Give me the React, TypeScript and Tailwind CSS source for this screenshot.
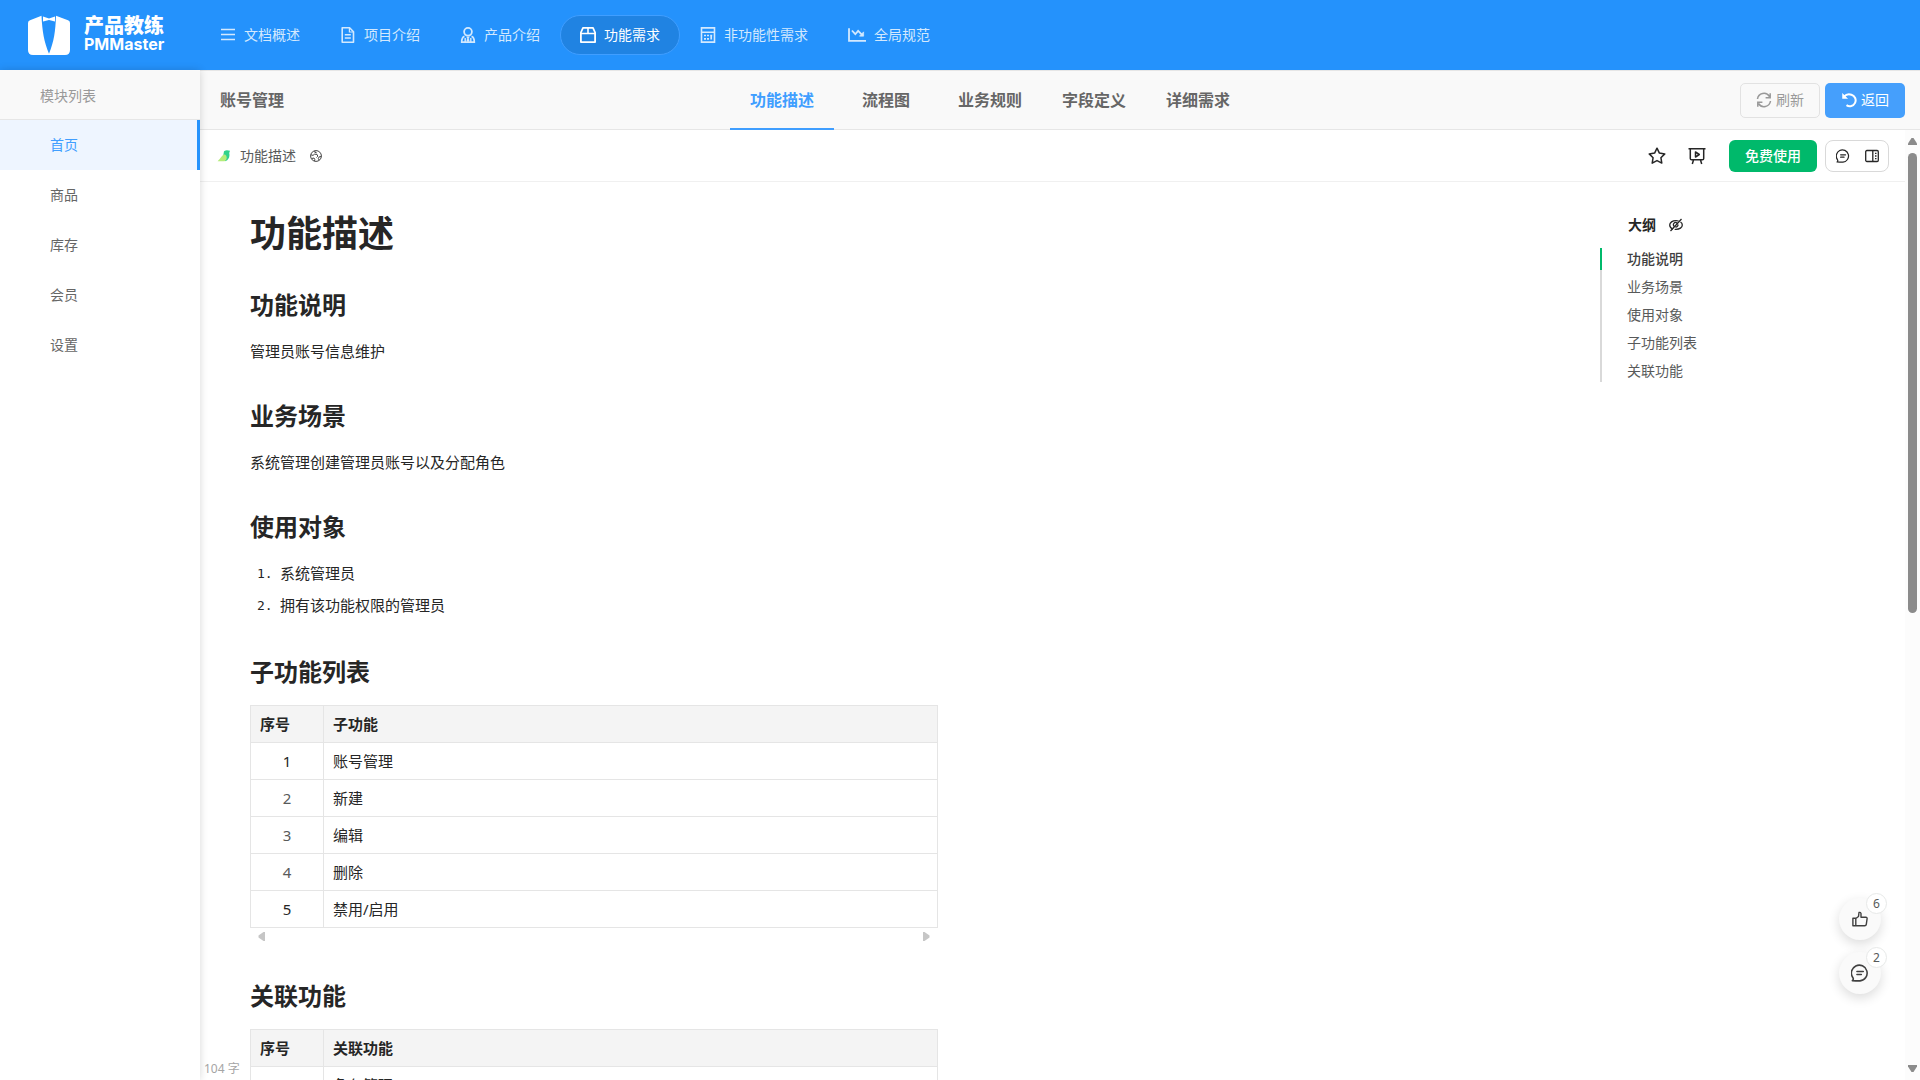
import type { ReactNode } from 'react';

type IconProps = { children: ReactNode; size?: string; viewBox?: string; stroke?: string };

function Icon({ children, size = 'size-4', viewBox = '0 0 16 16', stroke = '1.6' }: IconProps) {
  return (
    <svg className={size + ' shrink-0'} viewBox={viewBox} fill="none" stroke="currentColor" strokeWidth={stroke} aria-hidden="true">
      {children}
    </svg>
  );
}

const navItems = [
  { label: '文档概述', icon: <path d="M1 2.5h14M1 7.5h14M1 12.5h14" /> },
  {
    label: '项目介绍',
    icon: (
      <>
        <path d="M2.2 .8h7.4l3.9 3.9v10.5H2.2z" strokeLinejoin="round" />
        <path d="M9.400 1v4h4" strokeWidth="1.2" />
        <path d="M4.800 7.800h6M4.800 11h6" />
      </>
    ),
  },
  {
    label: '产品介绍',
    icon: (
      <>
        <circle cx="8" cy="4.800" r="3.900" strokeWidth="1.800" />
        <path d="M4.500 9.400C2.600 10 1.700 11.300 1.700 15.100h12.600c0-3.800-.9-5.100-2.800-5.700" strokeWidth="1.700" />
        <path d="M5.200 11v4M10.800 11v4" strokeWidth="1.400" />
        <path d="M6.600 9.800h2.800L8.700 11.500l.6 2.500L8 15l-1.300-1 .6-2.500z" fill="currentColor" strokeWidth="0.300" />
      </>
    ),
  },
  {
    label: '功能需求',
    icon: (
      <>
        <path d="M3 .9h10l2.1 4.6v9.6H.9V5.5z" strokeWidth="1.800" strokeLinejoin="round" />
        <path d="M1 6.5h14M8 1v5.5" />
      </>
    ),
  },
  {
    label: '非功能性需求',
    icon: (
      <>
        <path d="M1.500 .9h13v14.200h-13zM1.500 5.200h13" />
        <path d="M4 8.500h2M7 8.500h2M10.200 8.500h2M4 11.800h2M7 11.800h2M11.200 8v4.600" strokeWidth="1.700" />
      </>
    ),
  },
  {
    label: '全局规范',
    size: 'size-[18px]',
    icon: (
      <>
        <path d="M.9 2v11.300H16" />
        <path d="M3.500 4l3 3.300 2.500-3 4 4" />
        <path d="M10.200 9h3.700V5.200z" fill="currentColor" strokeWidth="0.6" />
      </>
    ),
  },
];

const modules = ['首页', '商品', '库存', '会员', '设置'];
const tabs = ['功能描述', '流程图', '业务规则', '字段定义', '详细需求'];
const outline = ['功能说明', '业务场景', '使用对象', '子功能列表', '关联功能'];
const subFeatures = ['账号管理', '新建', '编辑', '删除', '禁用/启用'];
const relatedFeatures = ['角色管理'];

function Logo() {
  return (
    <a href="#" className="flex w-[200px] shrink-0 items-center pl-7 text-white">
      <svg className="h-10 w-[42px]" viewBox="0 0 42 40" fill="currentColor" aria-hidden="true">
        <path d="M13.5.8 2 5.2Q0 6 0 8v27q0 5 5 5h32q5 0 5-5V8q0-2-2-2.8L28 .8c-.5 15-2 26-7 38-5-12-6.8-23-7.500-38z" />
        <path d="M15 1.500l6 2 6-2v5l-6-1.500-6 1.500z" />
      </svg>
      <span className="flex flex-col pb-0.5 pl-3.5">
        <span className="text-xl leading-[20px] font-black">产品教练</span>
        <span className="font-['Inter','Noto_Sans_CJK_SC',sans-serif] text-base leading-[16px] font-bold">PMMaster</span>
      </span>
    </a>
  );
}

function CommentIcon({ size }: { size: string }) {
  return (
    <Icon size={size} stroke="1.4">
      <path d="M1.200 14.800c.9-.6 1.100-1.500.5-2.600A7 7 0 1 1 8 15c-2.700 0-4.300 0-6.800-.2z" strokeLinejoin="round" />
      <path d="M5.300 6.600h5.600M5.300 9.400h3.900" strokeLinecap="round" />
    </Icon>
  );
}

function FeatureTable({ title, rows }: { title: string; rows: string[] }) {
  return (
    <table className="mt-[15px] w-full max-w-[688px] table-fixed border-collapse text-[15px] leading-6 text-[#262626]">
      <thead>
        <tr className="h-[37px] bg-[#f4f4f4] text-left">
          <th scope="col" className="w-[73px] border border-[#e5e5e5] px-[9px] py-0 font-bold">序号</th>
          <th scope="col" className="border border-[#e5e5e5] px-[9px] py-0 font-bold">{title}</th>
        </tr>
      </thead>
      <tbody>
        {rows.map((row, i) => (
          <tr key={row} className="h-[37px]">
            <td className={'border border-[#e5e5e5] py-0 text-center ' + (i > 0 && i < 4 ? 'text-[#585a5a]' : '')}>{i + 1}</td>
            <td className="border border-[#e5e5e5] px-[9px] py-0">{row}</td>
          </tr>
        ))}
      </tbody>
    </table>
  );
}

function Heading({ children }: { children: ReactNode }) {
  return <h2 className="mt-8 text-2xl leading-9 font-bold">{children}</h2>;
}

export default function App() {
  return (
    <div className="flex h-screen flex-col overflow-hidden bg-white font-['Noto_Sans','Noto_Sans_CJK_SC',sans-serif] text-sm text-[#262626]">
      <header className="flex h-[70px] shrink-0 items-center bg-[#2492fc]">
        <Logo />
        <nav className="flex items-center">
          {navItems.map((item) => (
            <a
              key={item.label}
              href="#"
              className={
                'flex h-10 items-center gap-2 rounded-full border px-[19px] leading-5 whitespace-nowrap ' +
                (item.label === '功能需求' ? 'border-[#409eff] bg-[#2083e2] text-white' : 'border-transparent text-[#d3e9fe]')
              }
            >
              <Icon size={item.size}>{item.icon}</Icon>
              {item.label}
            </a>
          ))}
        </nav>
      </header>

      <div className="flex min-h-0 flex-1">
        <aside className="z-10 w-[200px] shrink-0 bg-white shadow-[0_0_8px_rgba(0,0,0,0.16)]">
          <h2 className="h-[50px] border-b border-[#e6e6e6] bg-[#f9f9f9] pl-10 leading-[52px] text-[#999]">模块列表</h2>
          <nav>
            {modules.map((m, i) => (
              <a
                key={m}
                href="#"
                className={
                  'block h-[50px] border-r-[3px] pl-[50px] leading-[50px] ' +
                  (i === 0 ? 'border-[#2492fc] bg-[#eef5ff] text-[#409eff]' : 'border-transparent text-[#666]')
                }
              >
                {m}
              </a>
            ))}
          </nav>
        </aside>

        <main className="flex min-w-0 flex-1 flex-col">
          <div className="flex h-[60px] shrink-0 items-center border-y border-[#e6e6e6] bg-[#f9f9f9] pr-[15px] pl-5">
            <h1 className="w-[510px] text-base font-bold text-[#666]">账号管理</h1>
            <div role="tablist" className="-mb-px flex self-stretch">
              {tabs.map((t, i) => (
                <button
                  key={t}
                  role="tab"
                  aria-selected={i === 0}
                  className={
                    'w-[104px] border-b-2 text-base font-bold ' +
                    (i === 0 ? 'border-[#409eff] text-[#409eff]' : 'border-transparent text-[#666]')
                  }
                >
                  {t}
                </button>
              ))}
            </div>
            <div className="ml-auto flex gap-[5px]">
              <button className="flex h-[35px] w-20 items-center justify-center gap-1 rounded-[5px] border border-[#e2e2e2] text-[#999]">
                <Icon stroke="1.500">
                  <path d="M1.500 7A6.500 6.500 0 0 1 13.500 4.500M14.500 9a6.500 6.500 0 0 1-12 2.500M14.200 1.200v4.600H9.600M1.800 14.800v-4.600h4.600" />
                </Icon>
                刷新
              </button>
              <button className="flex h-[35px] w-20 items-center justify-center gap-1 rounded-[5px] bg-[#459ffc] text-white">
                <Icon stroke="2">
                  <path d="M3 4.500C5 2.500 8 1.800 10.500 2.800a5.800 5.800 0 1 1-5 10.300" />
                  <path d="M1.500 1.500v5h5z" fill="currentColor" strokeWidth="0.5" />
                </Icon>
                返回
              </button>
            </div>
          </div>

          <div className="flex min-h-0 flex-1">
            <section className="relative flex min-w-0 flex-1 flex-col overflow-hidden">
              <div className="flex h-[52px] shrink-0 items-center border-b border-[#f0f0f0] pr-4 pl-[17px]">
                <svg className="size-3.5" viewBox="0 0 14 14" aria-hidden="true">
                  <path d="M7 2.200C9.500.8 11 1.500 13 1.800L12.200 4c1 4-1 7.500-4 8.200L6 8z" fill="#30d28c" />
                  <path d="M.6 12.200C4 9 5.500 5 8 5.500c2.500 1.500 2.200 5.500-.5 6.700z" fill="#b5ec7a" />
                </svg>
                <span className="ml-[9px] text-[#585a5a]">功能描述</span>
                <span className="ml-3.5 text-[#444]">
                  <Icon size="size-3" viewBox="0 0 12 12" stroke="1">
                    <circle cx="6" cy="6" r="5.400" />
                    <path d="M1 4.800l2 .6 1.500-1.200 2.500.2.800 1.800-1.300 1.300M5 .9l-.3 1.300 2 .6M11.200 6.500l-2 .3-.9 1.800.9 1.600M1.800 8.500l2.200-.5.8 1.500-.3 1.500" />
                  </Icon>
                </span>
                <div className="ml-auto flex items-center text-[#262626]">
                  <button aria-label="收藏" className="p-[11px]">
                    <Icon size="size-[18px]" viewBox="0 0 18 18" stroke="1.500">
                      <path d="M9 1.200l2.400 4.900 5.400.8-3.900 3.800.9 5.400L9 13.600l-4.800 2.500.9-5.400L1.200 6.900l5.400-.8z" strokeLinejoin="round" />
                    </Icon>
                  </button>
                  <button aria-label="演示" className="p-[11px]">
                    <Icon size="size-[18px]" viewBox="0 0 18 18" stroke="1.500">
                      <path d="M.5 1.800h17M2.300 2v9.500q0 1.300 1.300 1.300h10.800q1.300 0 1.300-1.300V2M5.500 13l-1.200 4M12.500 13l1.200 4" />
                      <path d="M7.500 5v5l3.800-2.500z" strokeLinejoin="round" />
                    </Icon>
                  </button>
                  <button className="ml-3 h-8 w-[88px] rounded-md bg-[#00b96b] font-medium text-white">免费使用</button>
                  <div className="ml-2 flex h-8 w-16 items-center justify-around rounded-lg border border-[#d9d9d9] px-0.5">
                    <button aria-label="评论"><CommentIcon size="size-3.5" /></button>
                    <button aria-label="侧栏">
                      <Icon size="size-3.5" viewBox="0 0 14 14" stroke="1.300">
                        <rect x=".7" y="1.500" width="12.600" height="11" rx="1.200" />
                        <path d="M7.800 1.500v11M10 4.300h1.500M10 7h1.500M10 9.700h1.500" />
                      </Icon>
                    </button>
                  </div>
                </div>
              </div>

              <div className="flex min-h-0 flex-1">
                <article className="min-w-0 flex-1 pt-7 pl-[50px] text-[15px]">
                  <h1 className="-mb-[3px] text-4xl leading-[48px] font-bold">功能描述</h1>
                  <Heading>功能说明</Heading>
                  <p className="mt-[13px] leading-[30px]">管理员账号信息维护</p>
                  <Heading>业务场景</Heading>
                  <p className="mt-[13px] leading-[30px]">系统管理创建管理员账号以及分配角色</p>
                  <Heading>使用对象</Heading>
                  <ol className="mt-[13px] leading-[31px]">
                    {['系统管理员', '拥有该功能权限的管理员'].map((t, i) => (
                      <li key={t} className="flex">
                        <span className="w-[30px] pl-[7px] font-['DejaVu_Sans_Mono',monospace] text-[13px] leading-[32px]">{i + 1}.</span>
                        {t}
                      </li>
                    ))}
                  </ol>
                  <Heading>子功能列表</Heading>
                  <FeatureTable title="子功能" rows={subFeatures} />
                  <div className="flex h-[18px] max-w-[688px] items-start justify-between px-2 pt-1 text-[#c6c6c6]">
                    <svg className="h-[9px] w-[7px]" viewBox="0 0 7 9" fill="currentColor" aria-hidden="true"><path d="M7 0v9H5.500L.5 5.500v-2L5.500 0z" /></svg>
                    <svg className="h-[9px] w-[7px]" viewBox="0 0 7 9" fill="currentColor" aria-hidden="true"><path d="M0 0v9h1.500l5-3.500v-2L1.500 0z" /></svg>
                  </div>
                  <Heading>关联功能</Heading>
                  <FeatureTable title="关联功能" rows={relatedFeatures} />
                </article>

                <aside className="w-[305px] shrink-0 pt-8">
                  <div className="flex h-[22px] items-center gap-[13px] pl-7">
                    <h2 className="font-bold">大纲</h2>
                    <button aria-label="隐藏大纲">
                      <Icon size="size-3.5" viewBox="0 0 14 14" stroke="1.300">
                        <path d="M4 11.200C2 10.400.7 8.500.7 7 .7 4.500 3.500 2.600 7 2.600c.9 0 1.800.1 2.600.4M11.500 4c1.200.8 1.800 1.900 1.800 3 0 2.500-2.800 4.400-6.300 4.400-.5 0-.9 0-1.300-.1" />
                        <path d="M5.200 8.500A2.200 2.200 0 0 1 8 5M1.500 13L12.500 1M9 6.500A2.200 2.200 0 0 1 6.500 9" />
                      </Icon>
                    </button>
                  </div>
                  <ul className="mt-3 flex flex-col gap-1.5 text-[#585a5a]">
                    {outline.map((o, i) => (
                      <li
                        key={o}
                        className={
                          'relative h-[22px] border-l-2 pl-[25px] leading-[22px] ' +
                          (i === 0
                            ? 'border-[#00b96b] font-medium text-[#404040]'
                            : 'border-[#d9d9d9] before:absolute before:-top-1.5 before:-left-0.5 before:h-1.5 before:w-0.5 before:bg-[#d9d9d9]')
                        }
                      >
                        <a href="#">{o}</a>
                      </li>
                    ))}
                  </ul>
                </aside>
              </div>

              <span className="absolute bottom-px left-1 text-xs leading-5 text-[#a5a5a5]">104 字</span>

              <div className="absolute right-6 bottom-[86px] flex flex-col gap-3">
                {[6, 2].map((count) => (
                  <button
                    key={count}
                    aria-label={count === 6 ? '点赞' : '评论'}
                    className="relative flex size-[42px] items-center justify-center rounded-full bg-[#fafafa] text-[#404040] shadow-[0_4px_12px_rgba(0,0,0,0.14)]"
                  >
                    {count === 6 ? (
                      <Icon stroke="1.400">
                        <path d="M.9 7.200h2.900v7.600H.9zM3.800 7.500L6.500 5.500 7 1.500q1.800-.6 2 1.200v3.500h4.800q1.500.1 1.300 1.500l-.8 5.700q-.2 1.400-1.600 1.400H3.800" strokeLinejoin="round" />
                      </Icon>
                    ) : (
                      <CommentIcon size="size-[18px]" />
                    )}
                    <span className="absolute -top-[5px] -right-1.5 flex size-[21px] items-center justify-center rounded-full border border-[#e7e9e8] bg-white text-xs text-[#585a5a]">
                      {count}
                    </span>
                  </button>
                ))}
              </div>
            </section>

            <div aria-hidden="true" className="flex w-[15px] shrink-0 flex-col items-center bg-[#fcfcfc] py-2 text-[#8b8b8b]">
              <svg className="h-[7px] w-[9px] shrink-0" viewBox="0 0 9 7" fill="currentColor"><path d="M3.500 0h2L9 5.500V7H0V5.500z" /></svg>
              <div className="mt-2 h-[460px] w-[9px] rounded-full bg-[#8b8b8b]" />
              <svg className="mt-auto h-[7px] w-[9px] shrink-0" viewBox="0 0 9 7" fill="currentColor"><path d="M0 0h9v1.500L5.500 7h-2L0 1.500z" /></svg>
            </div>
          </div>
        </main>
      </div>
    </div>
  );
}
